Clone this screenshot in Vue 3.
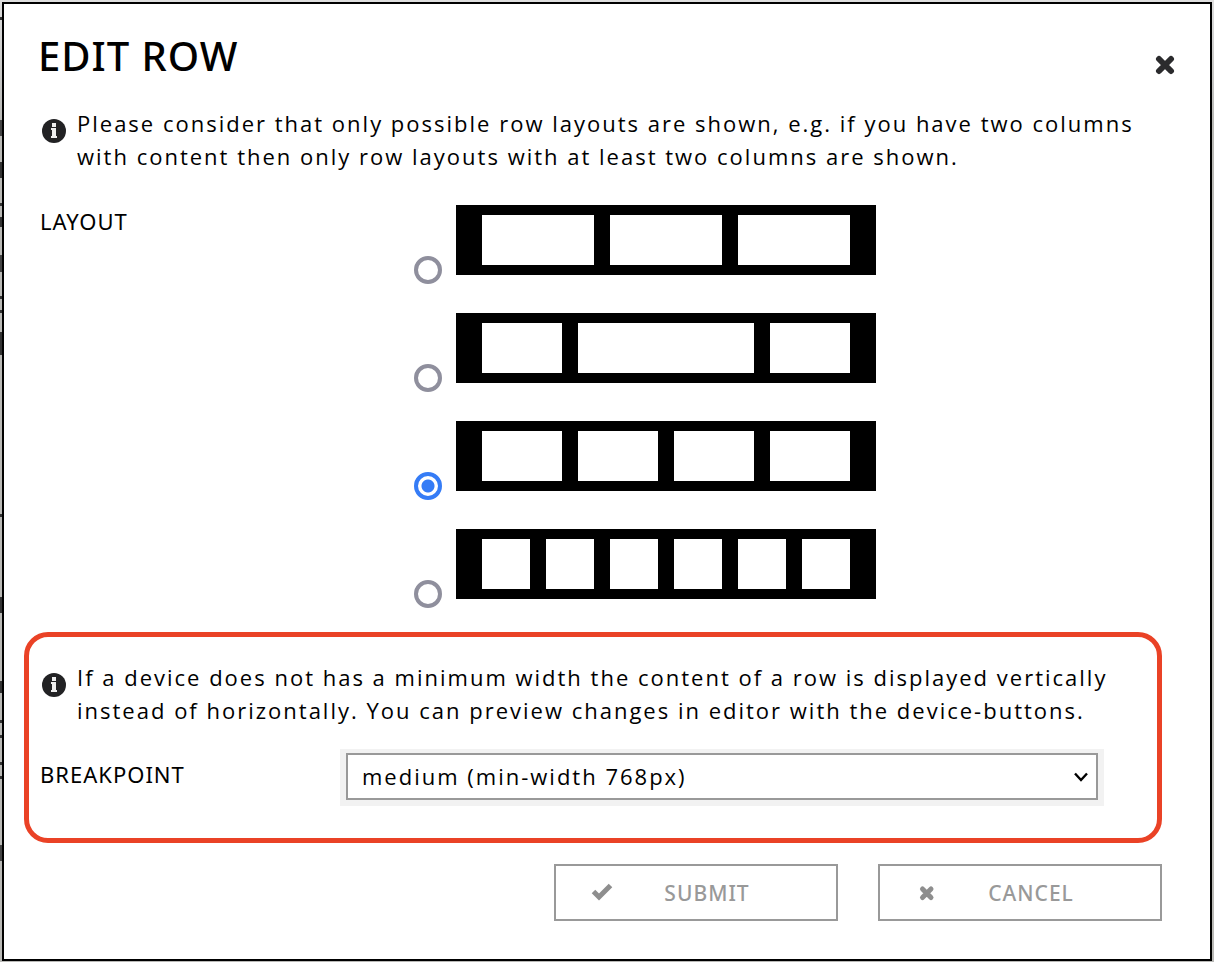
<script setup>
import { ref } from 'vue'

const layouts = [
  { name: 'Three equal columns', spans: [1, 1, 1] },
  { name: 'Wide centre column', spans: [1, 2, 1] },
  { name: 'Four equal columns', spans: [1, 1, 1, 1] },
  { name: 'Six equal columns', spans: [1, 1, 1, 1, 1, 1] }
]
const selected = ref(2)
const breakpoint = ref('medium')
</script>

<template>
  <div class="backdrop">
    <form class="dialog" role="dialog" aria-labelledby="dialog-title" @submit.prevent>
      <header class="head">
        <h1 id="dialog-title">EDIT ROW</h1>
        <button type="button" class="close" aria-label="Close">
          <svg viewBox="0 0 20 20" width="20" height="20" aria-hidden="true">
            <path d="M4 4L16 16M16 4L4 16" stroke="#2b2b2d" stroke-width="6" stroke-linecap="round" />
          </svg>
        </button>
      </header>

      <div class="info">
        <svg class="info-icon" viewBox="0 0 26 26" width="26" height="26" aria-hidden="true">
          <circle cx="13" cy="13" r="12" fill="#222224" />
          <path d="M11 5h4v4h-4zM10 10h5v8h1v2h-6v-2h1v-6h-1z" fill="#eee" />
        </svg>
        <p>Please consider that only possible row layouts are shown, e.g. if you have two columns with content then only row layouts with at least two columns are shown.</p>
      </div>

      <fieldset class="layouts" aria-labelledby="layout-label">
        <span id="layout-label" class="label">LAYOUT</span>
        <div class="options">
          <label v-for="(item, i) in layouts" :key="item.name" class="option">
            <input v-model="selected" type="radio" name="layout" :value="i" :aria-label="item.name" />
            <span class="diagram">
              <span v-for="(s, n) in item.spans" :key="n" class="cell" :class="{ double: s === 2 }"></span>
            </span>
          </label>
        </div>
      </fieldset>

      <section class="highlight">
        <div class="info">
          <svg class="info-icon" viewBox="0 0 26 26" width="26" height="26" aria-hidden="true">
            <circle cx="13" cy="13" r="12" fill="#222224" />
            <path d="M11 5h4v4h-4zM10 10h5v8h1v2h-6v-2h1v-6h-1z" fill="#eee" />
          </svg>
          <p>If a device does not has a minimum width the content of a row is displayed vertically instead of horizontally. You can preview changes in editor with the device-buttons.</p>
        </div>
        <div class="field">
          <label class="label" for="breakpoint">BREAKPOINT</label>
          <div class="frame">
            <select id="breakpoint" v-model="breakpoint">
              <option value="medium">medium (min-width 768px)</option>
            </select>
            <svg class="chevron" viewBox="0 0 14 10" width="14" height="10" aria-hidden="true">
              <path d="M1 1.5L7 8L13 1.5" fill="none" stroke="#000" stroke-width="2.4" />
            </svg>
          </div>
        </div>
      </section>

      <footer class="actions">
        <button type="submit" class="action">
          <svg viewBox="0 0 22 20" width="22" height="20" aria-hidden="true">
            <path d="M2.5 8.5L8 14L19.5 2.5" fill="none" stroke="#8e8e8e" stroke-width="5" />
          </svg>
          <span>SUBMIT</span>
        </button>
        <button type="button" class="action">
          <svg viewBox="0 0 22 20" width="22" height="20" aria-hidden="true">
            <path d="M7.5 6L16 14.5M16 6L7.5 14.5" fill="none" stroke="#8e8e8e" stroke-width="5" stroke-linecap="round" />
          </svg>
          <span>CANCEL</span>
        </button>
      </footer>
    </form>
  </div>
</template>

<style>
body {
  background: #b9b9b6;
}
</style>

<style scoped>
.backdrop {
  padding: 2px 2px 1px;
  background:
    linear-gradient(
      transparent 17px, #333 17px 20px, transparent 20px 120px,
      #444 120px 136px, transparent 136px 162px, #333 162px 178px,
      transparent 178px 203px, #333 203px 206px, transparent 206px 217px,
      #333 217px 227px, transparent 227px 255px, #444 255px 272px,
      transparent 272px 296px, #333 296px 299px, transparent 299px 310px,
      #333 310px 313px, transparent 313px 332px, #333 332px 355px,
      transparent 355px 514px, #333 514px 517px, transparent 517px 597px,
      #333 597px 613px, transparent 613px 681px, #333 681px 693px,
      transparent 693px 720px, #333 720px 723px, transparent 723px 735px,
      #333 735px 738px, transparent 738px 762px, #333 762px 765px,
      transparent 765px 776px, #333 776px 779px, transparent 779px 845px,
      #444 845px 861px, transparent 861px
    ) left top / 2px 100% no-repeat,
    linear-gradient(#dedede, #b9b9b6 120px);
  font-family: "Open Sans", "Noto Sans", sans-serif;
  font-size: 22px;
  line-height: 33px;
  letter-spacing: 2px;
  color: #000;
}

.dialog {
  padding: 28px 48px 38px 20px;
  border: 2px solid #000;
  background: #fff;
}

.head {
  display: flex;
  justify-content: space-between;
  align-items: center;
  margin: 0 -13px 27px 14px;
}

h1 {
  margin: 0;
  font-family: "Noto Sans", sans-serif;
  font-size: 40px;
  font-weight: 500;
  line-height: 48px;
  letter-spacing: 1px;
}

.close {
  display: flex;
  margin-top: 18px;
  padding: 0;
  border: 0;
  background: none;
}

.info {
  display: grid;
  grid-template-columns: 26px 1fr;
  column-gap: 10px;
  align-items: start;
  margin: 0 16px 0 17px;
}

.info-icon {
  margin-top: 11px;
}

.info p {
  margin: 0;
}

.layouts {
  display: flex;
  min-width: 0;
  margin: 32px 0 24px;
  padding: 0 0 0 16px;
  border: 0;
}

.layouts .label {
  flex: 0 0 374px;
}

.label {
  font-family: "Noto Sans", sans-serif;
  font-size: 22px;
  line-height: 32px;
  letter-spacing: 1px;
}

.options {
  display: grid;
  gap: 29px;
}

.option {
  display: flex;
  gap: 14px;
}

.option input {
  appearance: none;
  align-self: flex-end;
  width: 28px;
  height: 28px;
  margin: 0;
  border: 4px solid #8f8f9d;
  border-radius: 50%;
}

.option input:checked {
  border-color: #357cf6;
  background: radial-gradient(circle, #357cf6 6px, #fff 7px);
}

.diagram {
  display: grid;
  grid-auto-flow: column;
  grid-auto-columns: 1fr;
  gap: 16px;
  box-sizing: border-box;
  width: 420px;
  height: 70px;
  margin-bottom: 9px;
  padding: 10px 26px;
  background: #000;
}

.cell {
  background: #fff;
}

.double {
  grid-column: span 2;
}

.highlight {
  padding: 24px 53px 32px 11px;
  border: 5px solid #ea4226;
  border-radius: 24px;
}

.highlight .info {
  margin: 0 -20px 0 1px;
}

.field {
  display: grid;
  grid-template-columns: 300px 1fr;
  margin-top: 22px;
}

.field .label {
  padding-top: 9px;
}

.frame {
  position: relative;
  padding: 4px 6px 6px;
  background: #f2f2f2;
}

select {
  display: block;
  appearance: none;
  width: 100%;
  height: 47px;
  padding: 0 14px;
  border: 2px solid #999;
  border-radius: 0;
  background: #fff;
  font: inherit;
  letter-spacing: inherit;
  color: #000;
}

.chevron {
  position: absolute;
  top: 23px;
  right: 16px;
  pointer-events: none;
}

.actions {
  display: flex;
  justify-content: flex-end;
  gap: 40px;
  margin-top: 21px;
}

.action {
  display: grid;
  grid-template-columns: 22px 1fr;
  align-items: center;
  width: 284px;
  height: 57px;
  padding: 0 35px;
  border: 2px solid #999;
  background: #fff;
  font-family: "Noto Sans", sans-serif;
  font-size: 21px;
  font-weight: 500;
  letter-spacing: 1px;
  color: #999;
}
</style>
